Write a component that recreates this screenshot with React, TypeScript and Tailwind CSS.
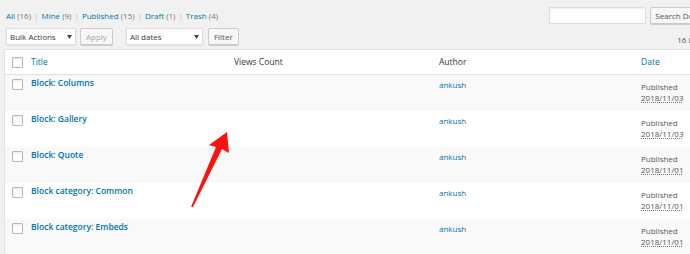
import React from 'react';

type Post = { title: string; date: string };

const posts: Post[] = [
  { title: 'Block: Columns', date: '2018/11/03' },
  { title: 'Block: Gallery', date: '2018/11/03' },
  { title: 'Block: Quote', date: '2018/11/01' },
  { title: 'Block category: Common', date: '2018/11/01' },
  { title: 'Block category: Embeds', date: '2018/11/01' },
];

const Checkbox: React.FC = () => (
  <span className="block w-[11px] h-[11px] bg-white border border-[#b4b9be] rounded-[1px] shadow-[inset_0_1px_2px_rgba(0,0,0,0.1)]" />
);

const Caret: React.FC = () => (
  <svg width="5" height="4" viewBox="0 0 5 4" className="shrink-0">
    <path d="M0 0 L5 0 L2.5 4 Z" fill="#444" />
  </svg>
);

const App: React.FC = () => {
  return (
    <div
      className="relative w-[690px] h-[254px] overflow-hidden bg-[#f1f1f1] text-[#555]"
      style={{ fontFamily: '"Open Sans", "Noto Sans", sans-serif' }}
    >
      {/* Filter links + search */}
      <div className="flex items-start h-[25px]">
        <div className="pl-[6px] pt-[10px] text-[8px] leading-[12px] whitespace-nowrap">
          <span className="text-[#0073aa]">All</span> <span className="text-[#777]">(16)</span>
          <span className="text-[#bbb] px-[3px]">|</span>
          <span className="text-[#0073aa]">Mine</span> <span className="text-[#777]">(9)</span>
          <span className="text-[#bbb] px-[3px]">|</span>
          <span className="text-[#0073aa]">Published</span> <span className="text-[#777]">(15)</span>
          <span className="text-[#bbb] px-[3px]">|</span>
          <span className="text-[#0073aa]">Draft</span> <span className="text-[#777]">(1)</span>
          <span className="text-[#bbb] px-[3px]">|</span>
          <span className="text-[#0073aa]">Trash</span> <span className="text-[#777]">(4)</span>
        </div>
        <div className="ml-auto flex gap-[4px] pt-[7px] -mr-[16px]">
          <div className="w-[97px] h-[17px] bg-white border border-[#ddd] shadow-[inset_0_1px_2px_rgba(0,0,0,0.07)]" />
          <div className="h-[17px] px-[4px] bg-[#f7f7f7] border border-[#ccc] rounded-[2px] shadow-[0_1px_0_#ccc] text-[8px] leading-[15px] text-[#555] whitespace-nowrap">
            Search Docs
          </div>
        </div>
      </div>

      {/* Bulk actions row */}
      <div className="flex items-center h-[23px] pl-[6px]">
        <div className="flex items-center justify-between w-[70px] h-[17px] px-[3px] bg-white border border-[#ddd] text-[8px] text-[#32373c] shadow-[0_1px_2px_rgba(0,0,0,0.07)]">
          <span>Bulk Actions</span>
          <Caret />
        </div>
        <div className="ml-[4px] h-[17px] px-[5px] bg-[#f7f7f7] border border-[#ccc] rounded-[2px] shadow-[0_1px_0_#ccc] text-[8px] leading-[15px] text-[#a0a5aa]">
          Apply
        </div>
        <div className="ml-[13px] flex items-center justify-between w-[77px] h-[17px] px-[3px] bg-white border border-[#ddd] text-[8px] text-[#32373c] shadow-[0_1px_2px_rgba(0,0,0,0.07)]">
          <span>All dates</span>
          <Caret />
        </div>
        <div className="ml-[5px] h-[17px] px-[5px] bg-[#f7f7f7] border border-[#ccc] rounded-[2px] shadow-[0_1px_0_#ccc] text-[8px] leading-[15px] text-[#555]">
          Filter
        </div>
        <div className="ml-auto -mr-[19px] text-[8px] text-[#555] pt-[6px] whitespace-nowrap">16 items</div>
      </div>

      {/* Table */}
      <div className="ml-[4px] mt-[1px] border-l border-t border-[#e1e1e1] bg-white">
        <div className="flex items-center h-[25px] border-b border-[#e1e1e1] text-[8.5px]">
          <div className="w-[26px] pl-[7px]">
            <Checkbox />
          </div>
          <div className="w-[203px] text-[#0073aa]">Title</div>
          <div className="w-[205px] text-[#32373c]">Views Count</div>
          <div className="w-[202px] text-[#32373c]">Author</div>
          <div className="text-[#0073aa]">Date</div>
        </div>
        {posts.map((p, i) => (
          <div
            key={p.title}
            className={`flex items-start h-[36px] ${i % 2 === 0 ? 'bg-[#f9f9f9]' : 'bg-white'}`}
          >
            <div className="w-[26px] pl-[7px] pt-[4px]">
              <Checkbox />
            </div>
            <div className="w-[203px] pt-[2px] text-[8.5px] font-semibold text-[#0073aa] whitespace-nowrap">
              {p.title}
            </div>
            <div className="w-[205px]" />
            <div className="w-[202px] pt-[4px] text-[8px] text-[#0073aa]">ankush</div>
            <div className="pt-[6px] text-[8px] leading-[11px] text-[#555]">
              <div>Published</div>
              <div className="underline decoration-dotted decoration-[#777]">{p.date}</div>
            </div>
          </div>
        ))}
      </div>

      {/* Annotation arrow */}
      <svg className="absolute left-0 top-0 pointer-events-none" width="690" height="254" viewBox="0 0 690 254">
        <path d="M191 207 L216 147 L209 145 L227 132 L229 153 L222 149 L193 207 Z" fill="#ff1010" />
      </svg>
    </div>
  );
};

export default App;
